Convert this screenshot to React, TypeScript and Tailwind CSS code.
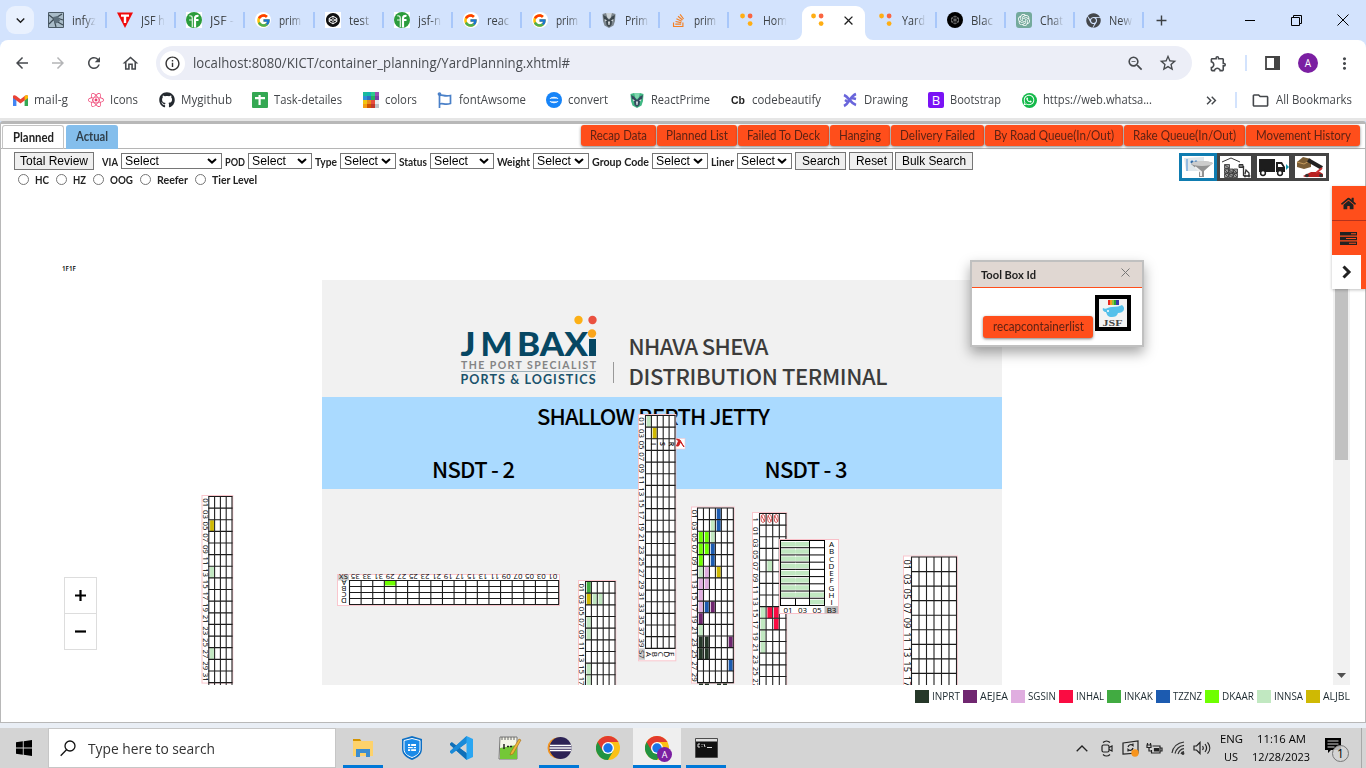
import { useLayoutEffect, useRef, useState, type ReactNode } from "react";
import {
  MdArrowBack, MdArrowForward, MdRefresh, MdOutlineHome, MdInfoOutline, MdOutlineExtension,
  MdZoomOut, MdStarBorder, MdMoreVert, MdClose, MdAdd, MdKeyboardArrowDown, MdOutlineFolder,
  MdKeyboardDoubleArrowRight,
} from "react-icons/md";
import { FaGithub, FaWhatsapp, FaStackOverflow, FaChrome, FaHome, FaReact } from "react-icons/fa";
import { FcGoogle } from "react-icons/fc";
import { SiOpenai, SiCodepen } from "react-icons/si";

/* Single line of text condensed or stretched to a given width. */
function Fit({ t, w, className = "" }: { t: string; w: number; className?: string }) {
  const ref = useRef<HTMLSpanElement>(null);
  const [s, setS] = useState(1);
  useLayoutEffect(() => {
    if (ref.current) setS(w / (ref.current.getBoundingClientRect().width || w));
  }, []);
  return (
    <span className={`block shrink-0 whitespace-pre ${className}`} style={{ width: w }}>
      <span ref={ref} className="inline-block origin-left" style={{ transform: `scaleX(${s})` }}>{t}</span>
    </span>
  );
}

const C = {
  dark: "#263829", purple: "#702670", pink: "#e0aee0", red: "#fa0c42", green: "#41ab41",
  blue: "#1c5bb0", lime: "#6eff00", mint: "#c1e8c1", gold: "#cfb903",
};

/* ---------- favicons ---------- */
const Globe = () => (
  <svg width="16" height="16" viewBox="0 0 16 16"><rect width="16" height="16" rx="1" fill="#4a5a66" /><rect x="1" y="1" width="14" height="14" fill="#a9bcc9" /><path d="M1 3l5 4 8-5M1 12l5-5 2 8M8 9l7 4M9 6l6 2" stroke="#3c4a54" strokeWidth="1.2" fill="none" /><path d="M5 5l5-1 2 5-5 3z" fill="#5d6f7c" /></svg>
);
const RedT = () => (
  <svg width="16" height="16" viewBox="0 0 16 16"><path d="M0 .5h16L8 16z" fill="#f00a0a" /><path d="M4 2.500h8v2.200H9.200V11H6.800V4.700H4z" fill="#fff" /></svg>
);
const GreenF = () => (
  <svg width="16" height="16" viewBox="0 0 16 16"><rect width="16" height="16" fill="#fff" /><circle cx="8" cy="8" r="8" fill="#2b9c3c" /><path d="M6.300 15V6.500C6.300 4.500 5.500 3.500 3.300 3.800M3 8h3.500" stroke="#e4f4e6" strokeWidth="1.200" fill="none" /><path d="M9 15.500V6.500C9 4.300 10.300 3.500 12.500 4M8 8h4.500" stroke="#fff" strokeWidth="2.200" fill="none" /></svg>
);
const Shield = ({ g = false }: { g?: boolean }) => (
  <svg width="16" height="16" viewBox="0 0 16 16"><path d="M1.500 2L5 1h6l3.500 1-.5 7-1.500 4.500L8 16l-4.500-2.500L2 9z" fill={g ? "#41b883" : "#7c868d"} /><path d="M2 3l3 1.500L8 8l3-3.500L14 3l-1 4-2 2-.500 4L8 15l-2.500-2L5 9 3 7z" fill={g ? "#35495e" : "#3c464c"} /><path d="M5 1h6l-1.500 5L8 7 6.500 6z" fill={g ? "#7fd6ae" : "#ccd3d7"} /><path d="M3.500 7l2.500 1.500-1.500.8zM12.500 7L10 8.500l1.500.8zM7 9.500h2L8.500 13h-1z" fill="#e8ecee" /></svg>
);
const Dots = () => (
  <svg width="18" height="18" viewBox="0 0 18 18"><circle cx="4" cy="4.500" r="2.700" fill="#ffae13" /><circle cx="12.500" cy="4.500" r="2.700" fill="#fa6541" /><circle cx="12.500" cy="13" r="2.700" fill="#ffae13" /></svg>
);
const Blackbox = () => (
  <svg width="16" height="16" viewBox="0 0 16 16"><circle cx="8" cy="8" r="8" fill="#000" /><path d="M8 4l3.500 2v4L8 12l-3.500-2V6zM8 4v8M4.500 6l7 4M11.500 6l-7 4" stroke="#999" strokeWidth=".6" fill="none" /></svg>
);
const Chat = () => (
  <span className="flex size-4 items-center justify-center rounded-[3px] bg-[#74aa9c] text-white"><SiOpenai size={12} /></span>
);

type Tab = [string, ReactNode, number];
const tabs: Tab[] = [
  ["infyz", <Globe />, 24], ["JSF h", <RedT />, 24], ["JSF -", <GreenF />, 24], ["prim", <FcGoogle size={15} />, 22],
  ["test", <SiCodepen size={14} color="#111" />, 20], ["jsf-n", <GreenF />, 23], ["reac", <FcGoogle size={15} />, 22],
  ["prim", <FcGoogle size={15} />, 22], ["Prim", <Shield />, 23], ["prim", <FaStackOverflow size={15} color="#f48024" />, 22],
  ["Hom", <Dots />, 24], ["", <Dots />, 0], ["Yard", <Dots />, 23], ["Blac", <Blackbox />, 22], ["Chat", <Chat />, 23],
  ["New", <FaChrome size={15} color="#44474b" />, 23],
];

function TabStrip() {
  return (
    <div className="flex h-10 bg-[#d3e3fd] text-[12px] text-[#3c4043]">
      <div className="mt-[6px] ml-[6px] flex h-7 w-7 items-center justify-center rounded-[9px] bg-[#e9f1fe]"><MdKeyboardArrowDown size={17} color="#1f1f1f" /></div>
      <div className="ml-1 flex">
        {tabs.map(([t, icon, w], i) => {
          if (i === 11)
            return (
              <div key={i} className="relative flex w-[69.15px] items-center pl-[3px]">
                <div className="mt-[6px] flex h-[34px] w-[63px] items-center rounded-t-[9px] bg-white pb-[6px] pl-[8px]">
                  <span className="flex w-4 items-center">{icon}</span>
                  <MdClose className="ml-[15px]" size={15} color="#1f1f1f" />
                </div>
                <svg className="absolute bottom-0 left-[-5px]" width="8" height="8"><path d="M8 0v8H0a8 8 0 0 0 8-8" fill="#fff" /></svg>
                <svg className="absolute right-[-5px] bottom-0" width="8" height="8"><path d="M0 0v8h8a8 8 0 0 1-8-8" fill="#fff" /></svg>
              </div>
            );
          return (
            <div key={i} className="flex w-[69.15px] items-center pl-[10px]">
              <span className={`flex h-4 w-4 items-center justify-center ${[3, 6, 7].includes(i) ? "rounded-full bg-white" : i === 4 ? "bg-white" : ""}`}>{icon}</span>
              <span className="ml-2 w-[24px] overflow-hidden [mask-image:linear-gradient(to_right,#000_50%,transparent)]"><Fit t={t} w={w} /></span>
              {i !== 10 && <span className="ml-auto h-4 w-[2px] bg-[#a8c7fa]" />}
            </div>
          );
        })}
      </div>
      <div className="flex w-[34px] items-center justify-center"><MdAdd size={17} /></div>
      <div className="ml-auto flex items-center pr-[17px] text-black">
        <span className="h-px w-[10px] bg-black" />
        <svg className="ml-[36px]" width="11" height="11" fill="none" stroke="#000"><path d="M.5 2.500h8v8h-8zM2.500 2.500v-2h8v8h-2" /></svg>
        <svg className="ml-[35px]" width="12" height="12" fill="none" stroke="#000"><path d="M.5.5l11 11M11.500.5l-11 11" /></svg>
      </div>
    </div>
  );
}

function Toolbar() {
  return (
    <div className="flex h-[46px] items-center rounded-t-[8px] bg-white text-[#46494d]">
      <div className="flex w-[156px] items-center gap-[18px] pl-[13px]">
        <MdArrowBack size={18} /><MdArrowForward size={18} color="#b4b5b7" /><MdRefresh size={18} /><MdOutlineHome size={19} />
      </div>
      <div className="flex h-[34px] w-[1036px] items-center rounded-full bg-[#eceef7] pr-[14px] pl-[4px]">
        <span className="flex size-[25px] items-center justify-center rounded-full bg-white"><MdInfoOutline size={17} color="#333" /></span>
        <Fit className="mb-[2px] ml-[8px] text-[14px] text-[#4a4d52]" t="localhost:8080/KICT/container_planning/YardPlanning.xhtml#" w={377} />
        <MdZoomOut className="ml-auto" size={19} /><MdStarBorder className="ml-[13px]" size={20} />
      </div>
      <MdOutlineExtension className="ml-[17px]" size={19} />
      <span className="ml-[17px] h-4 w-[2px] bg-[#d3e3fd]" />
      <svg className="ml-[18px]" width="15" height="14"><path d="M1 1h13v12H1z" fill="none" stroke="#444" strokeWidth="1.800" /><path d="M9 0h6v14H9z" fill="#444" /></svg>
      <span className="ml-[18px] flex size-5 items-center justify-center rounded-full bg-[#7b1fa2] text-[10px] text-white">A</span>
      <MdMoreVert className="ml-[17px]" size={19} />
    </div>
  );
}

const swatches = ["#1abc9c", "#12b5b0", "#2cc98f", "#9b4fb0", "#2f8fd8", "#2f6fc0", "#27ae60", "#7a3ea8", "#f1c40f", "#e98b1c", "#e74c3c", "#e8ecee", "#f39c12", "#d35400", "#c0392b", "#bdc3c7"];
const bookmarks: [string, ReactNode, number][] = [
  ["mail-g", <svg width="15" height="11" viewBox="0 0 15 11"><path d="M0 1v10h3.400V4z" fill="#4285f4" /><path d="M15 1v10h-3.400V4z" fill="#34a853" /><path d="M0 1.500C0 0 2 0 3 .8L7.500 4.200 12 .8C13 0 15 0 15 1.500V3L7.500 8.500 0 3z" fill="#ea4335" /><path d="M11.600 1v4.400L15 3V1.500C15 0 13 0 11.600 1z" fill="#fbbc04" /></svg>, 34],
  ["Icons", <FaReact size={16} color="#ee3c6e" />, 28],
  ["Mygithub", <FaGithub size={16} color="#24292f" />, 51],
  ["Task-detailes", <svg width="16" height="16"><rect width="16" height="16" rx="1" fill="#34a853" /><path d="M3 5h10v2.200H8.700V13H6.500V7.200H3zM6.500 3h2.200v3H6.500z" fill="#fff" /></svg>, 68],
  ["colors", <svg width="16" height="16">{swatches.map((c, i) => <rect key={i} x={(i % 4) * 4} y={(i >> 2) * 4} width="4" height="4" fill={c} />)}</svg>, 32],
  ["fontAwsome", <svg width="16" height="16" fill="none" stroke="#4a80c8" strokeWidth="1.700"><path d="M2.500 2v14M2.500 3.500c3-1.500 4 1.500 11 0v8c-6 2-7.500-1-11 .5" /><circle cx="2.500" cy="2" r="1" /></svg>, 67],
  ["convert", <svg width="16" height="16"><circle cx="8" cy="8" r="8" fill="#1684f8" /><path d="M3.500 7a4.800 3.500 0 0 1 9 0zM3.500 9a4.800 3.500 0 0 0 9 0z" fill="#fff" opacity=".9" /><path d="M5 7h6M5 9h6" stroke="#1684f8" strokeWidth=".8" /></svg>, 40],
  ["ReactPrime", <Shield g />, 59],
  ["codebeautify", <Fit className="font-['Liberation_Sans',sans-serif] text-[10px] font-bold text-[#222]" t="Cb" w={14} />, 69],
  ["Drawing", <svg width="16" height="16"><path d="M2 3c5 2 6 8 12 10M14 2C8 4 8 11 2 14M3 8l3 2M10 6l4 1" stroke="#6965db" strokeWidth="2.600" fill="none" /></svg>, 44],
  ["Bootstrap", <span className="flex size-4 items-center justify-center rounded-[2px] bg-[#7a12f5] text-[13px] text-white">B</span>, 51],
  ["https://web.whatsa...", <span className="flex size-[15px] items-center justify-center rounded-full bg-[#14b94a]"><FaWhatsapp size={12} color="#fff" /></span>, 109],
];

function Bookmarks() {
  return (
    <div className="flex h-[32px] items-center bg-white pb-[4px] pl-[12px] text-[12px] text-[#44474b]">
      <div className="flex gap-5">
        {bookmarks.map(([t, icon, w]) => (
          <div key={t} className="flex items-center gap-[6px] pr-[0.4px]">
            <span className="flex h-4 w-4 items-center justify-center">{icon}</span>
            <Fit className="mb-px" t={t} w={w} />
          </div>
        ))}
      </div>
      <MdKeyboardDoubleArrowRight className="ml-[50px]" size={17} />
      <span className="ml-[15px] h-4 w-[2px] bg-[#d3e3fd]" />
      <MdOutlineFolder className="ml-[14px]" size={19} />
      <Fit className="mb-px ml-[6px]" t="All Bookmarks" w={76} />
    </div>
  );
}

/* ---------- application header ---------- */
const actions: [string, number, string][] = [
  ["Recap Data", 57, "w-[75px]"], ["Planned List", 62, "w-[80px]"], ["Failed To Deck", 73, "w-[91px]"], ["Hanging", 42, "w-[60px]"],
  ["Delivery Failed", 75, "w-[93px]"], ["By Road Queue(In/Out)", 120, "w-[138px]"], ["Rake Queue(In/Out)", 103, "w-[121px]"], ["Movement History", 95, "w-[114px]"],
];

function Header() {
  return (
    <div className="flex h-[25px] border-b border-[#b5b5b5] pt-px pl-px font-['Lato',sans-serif] text-[12.5px]">
      <div className="flex h-6 w-[62px] items-center justify-center rounded-t-[3px] border border-b-0 border-[#c4c4c4] pb-px font-bold text-[#222]"><Fit t="Planned" w={41} /></div>
      <div className="ml-[2px] flex h-6 w-[52px] items-center justify-center rounded-t-[3px] bg-[#84beec] pb-px font-bold text-[#30404c]"><Fit t="Actual" w={32} /></div>
      <div className="mr-[5px] ml-auto flex gap-px">
        {actions.map(([t, w, cls]) => (
          <button key={t} className={`${cls} flex h-[21px] items-center justify-center rounded-[3px] bg-[#ff4e1b] pb-px text-[#5e2214] shadow-[0_1px_3px_rgba(0,0,0,0.5)]`}><Fit t={t} w={w} /></button>
        ))}
      </div>
    </div>
  );
}

const Label = ({ t, w, c = "" }: { t: string; w: number; c?: string }) => (
  <Fit className={`font-['Lato',sans-serif] text-[11px] font-bold text-[#222] ${c}`} t={t} w={w} />
);
const Sel = ({ c = "w-[56px]" }: { c?: string }) => (
  <div className={`${c} flex h-4 shrink-0 items-center border border-[#767676] bg-white pr-[4px] pl-[3px] text-[12px] text-black`}>
    <Fit t="Select" w={34} />
    <svg className="ml-auto" width="10" height="6" fill="none" stroke="#000" strokeWidth="2"><path d="M1 1l4 3.600L9 1" /></svg>
  </div>
);
const Btn = ({ t, w, c }: { t: string; w: number; c: string }) => (
  <button className={`${c} flex h-[18px] shrink-0 items-center justify-center border border-[#767676] bg-[#efefef] text-[12px] text-black`}><Fit t={t} w={w} /></button>
);
const Radio = ({ t, w, c = "" }: { t: string; w: number; c?: string }) => (
  <div className={`flex items-center ${c}`}>
    <span className="mb-[2px] size-[11px] rounded-full border border-[#767676] bg-white" />
    <Label c="mb-px ml-[6px]" t={t} w={w} />
  </div>
);

function Pictures() {
  return (
    <div className="flex h-[28px] bg-[#444]">
      <div className="flex h-7 w-[38px] items-center justify-center border-[3px] border-[#0f7cb0] bg-white">
        <svg width="32" height="22"><path d="M2 2l20-1v14H4z" fill="#dfe6ea" /><path d="M5 3v12M9 5h2v2H9zM13 5h2v2h-2z" stroke="#4a90d8" /><path d="M9 8c6-3 16-3 22-1l-9 8v6h-5v-6z" fill="#929292" /><ellipse cx="20" cy="7.500" rx="10.500" ry="2.500" fill="#ccc" /><path d="M13 11l6 5v4" stroke="#eee" strokeWidth="2" fill="none" /></svg>
      </div>
      <div className="flex w-[37px] items-center justify-center">
        <svg className="bg-white" width="31" height="22" fill="none" stroke="#333"><path d="M2 6l9-4 9 4" /><path d="M4.500 8.500h5v4h-5zM4.500 13h4v4h-4zM9 13h4v4H9zM13.500 13h4v4h-4zM4.500 17.500h4v4h-4zM9 17.500h4v4H9zM13.500 17.500h4v4h-4z" fill="#999" strokeWidth=".8" /><path d="M5 9l4 3M5 14l3 3M9 14l4 3M14 14l3 3M5 18l3 3M9 18l4 3M14 18l3 3" strokeWidth=".8" /><path d="M19 8.500h4v3h-4z" fill="#777" /><path d="M23.500 10v10M25 18l1-4 3 3v3h-5" strokeWidth="1.300" /><circle cx="25" cy="20" r="1" /><circle cx="29" cy="20" r="1" /></svg>
      </div>
      <div className="flex w-[38px] items-center justify-center">
        <svg className="bg-white" width="32" height="22"><path d="M2 3h16v13H2zM19 6h6l3 5v5h-9z" fill="#1d1d1d" /><path d="M21 8h3l2 3h-5z" fill="#fff" /><path d="M29 8l3 3-3 3z" fill="#1397ac" /><circle cx="6" cy="17" r="2.400" fill="#fff" stroke="#1d1d1d" strokeWidth="1.500" /><circle cx="23" cy="17" r="2.400" fill="#fff" stroke="#1d1d1d" strokeWidth="1.500" /></svg>
      </div>
      <div className="flex w-[37px] items-center justify-center">
        <svg className="bg-white" width="31" height="22"><path d="M2 6l6-5 8 2v8l-7 2-7-2z" fill="#7a5d35" /><path d="M2 6l7 2 7-4" stroke="#c79c5d" fill="none" /><path d="M13 4l14 8" stroke="#222" strokeWidth="4" /><path d="M8 20l8-4h9l3 2v3H10z" fill="#b82222" /><path d="M27 12l-6 5" stroke="#c33" strokeWidth="2" /><circle cx="12" cy="19.500" r="1.800" fill="#333" /><circle cx="26" cy="19.500" r="1.800" fill="#333" /></svg>
      </div>
    </div>
  );
}

function Filters() {
  return (
    <div className="flex h-[38px] pt-[3px] pr-[36px] pl-[13px] font-['Liberation_Sans',sans-serif]">
      <div>
        <div className="flex h-[18px] items-center gap-[3px]">
          <Btn c="w-[80px]" t="Total Review" w={68} />
          <Label c="ml-[5px]" t="VIA" w={16} /><Sel c="w-[101px]" />
          <Label t="POD" w={20} /><Sel c="w-[64px]" />
          <Label t="Type" w={22} /><Sel />
          <Label t="Status" w={28} /><Sel c="w-[64px]" />
          <Label t="Weight" w={33} /><Sel />
          <Label t="Group Code" w={57} /><Sel />
          <Label t="Liner" w={23} /><Sel c="w-[55px]" />
          <Btn c="w-[51px]" t="Search" w={38} /><Btn c="w-[44px]" t="Reset" w={31} /><Btn c="-ml-px w-[78px]" t="Bulk Search" w={64} />
        </div>
        <div className="flex h-[20px] items-center pl-[4px]">
          <Radio t="HC" w={14} /><Radio c="ml-[7px]" t="HZ" w={13} /><Radio c="ml-[7px]" t="OOG" w={23} /><Radio c="ml-[7px]" t="Reefer" w={31} /><Radio c="ml-[7px]" t="Tier Level" w={45} />
        </div>
      </div>
      <div className="mt-px ml-auto"><Pictures /></div>
    </div>
  );
}

/* ---------- yard map ---------- */
type Cell = [row: number, col: number, color: string];
const odd = (n: number) => Array.from({ length: n }, (_, i) => String(i * 2 + 1).padStart(2, "0"));

/* Vertical yard block: rotated bay numbers on the left, rows of slots on the right. */
function Block({ x, y, gx, cw, cols, rh, labels, cells, footer, fs = 7.8 }: {
  x: number; y: number; gx: number; cw: number; cols: number; rh: number; labels: string[]; cells: Cell[]; footer?: string; fs?: number;
}) {
  const n = labels.length, W = cols * cw, H = n * rh, end = footer ? 12 : 0;
  return (
    <g>
      <rect x={x} y={y - 1} width={gx + W - x + 0.8} height={H + end + 1.5} fill="#fff" stroke="#f9c6cd" />
      {footer && <rect x={x + 0.5} y={y + H} width={gx - x - 1} height={11.5} fill="#ccc" />}
      {cells.map(([r, c, f], i) => <rect key={i} x={gx + c * cw + 1.3} y={y + r * rh + 0.5} width={cw - 2} height={rh - 0.5} fill={f} />)}
      <path d={Array.from({ length: n + 1 }, (_, i) => `M${gx - 0.5} ${y + i * rh}h${W + 1}`).join("")} stroke="#1a1a1a" strokeWidth="1.15" />
      <path d={Array.from({ length: cols + 1 }, (_, i) => `M${gx + i * cw} ${y}v${H}`).join("")} stroke="#222" strokeWidth="1.1" />
      {labels.map((l, i) => (
        <text key={i} transform={`translate(${x + 0.7} ${y + (i + 0.5) * rh + 0.5}) rotate(90)`} fontSize={fs} fontWeight="500" textAnchor="middle" fill="#000">{l}</text>
      ))}
      {footer && <text transform={`translate(${x + 0.7} ${y + H + 6}) rotate(90)`} fontSize="7.800" fontWeight="500" textAnchor="middle" fill="#222">{footer}</text>}
      {footer && "ABCDE".split("").map((l, i) => (
        <text key={l} transform={`translate(${gx + i * cw + 0.3} ${y + H + 6}) rotate(90)`} fontSize="8" fontWeight="500" textAnchor="middle">{l}</text>
      ))}
    </g>
  );
}

function YardMap() {
  const hx = (i: number) => 349.5 + i * 11.62;
  return (
    <svg width="1332" height="499" viewBox="1 187 1332 499" className="block font-['Open_Sans','Noto_Sans',sans-serif]">
      <text x="62" y="271" fontSize="7.500" fontWeight="600" textLength="14" lengthAdjust="spacingAndGlyphs">1F1F</text>
      <rect x="322" y="280" width="680" height="410" fill="#f1f1f1" />
      <rect x="322" y="397" width="680" height="92" fill="#aadaff" />
      <g className="font-['Lato',sans-serif]" fill="#064763">
        <text x="460.500" y="356" fontSize="33" fontWeight="900" textLength="15" lengthAdjust="spacingAndGlyphs">J</text>
        <text x="480.500" y="356" fontSize="33" fontWeight="900" textLength="32" lengthAdjust="spacingAndGlyphs">M</text>
        <text x="517" y="356" fontSize="33" fontWeight="900" textLength="71" lengthAdjust="spacingAndGlyphs">BAX</text>
        <path d="M589 339h7v17h-7z" />
        <text x="461" y="369" fontSize="10.500" fontWeight="700" fill="#848484" textLength="135">THE PORT SPECIALIST</text>
        <path d="M461 371.500h135" stroke="#9fb1ba" />
        <text x="460.500" y="383.500" fontSize="12.500" fontWeight="700" fill="#1b536c" textLength="135">PORTS &amp; LOGISTICS</text>
      </g>
      <circle cx="578.500" cy="320" r="4.200" fill="#fcb016" /><circle cx="592.500" cy="320" r="4.200" fill="#ea5140" /><circle cx="592" cy="333.500" r="4.200" fill="#fba61c" />
      <path d="M613.500 362v21" stroke="#999" />
      <g className="font-['Noto_Sans_CJK_SC',sans-serif]" fontSize="22" fontWeight="500">
        <g fill="#3c3c3b">
          <text x="628.500" y="354.500" textLength="140">NHAVA SHEVA</text>
          <text x="628.500" y="384.500" textLength="259">DISTRIBUTION TERMINAL</text>
        </g>
        <text x="537" y="425" textLength="233">SHALLOW BERTH JETTY</text>
        <text x="432" y="478" textLength="83">NSDT - 2</text>
        <text x="764.500" y="478" textLength="83">NSDT - 3</text>
      </g>

      <Block x={202} y={496.5} gx={208.8} cw={5.8} cols={4} rh={11.63} labels={odd(16)} cells={[[2, 0, C.gold], [6, 0, C.mint], [13, 0, C.mint]]} />
      <path d="M208.800 682.600v4M214.600 682.600v4M220.400 682.600v4M226.200 682.600v4M232 682.600v4" stroke="#222" />
      <g>
        <rect x="337.500" y="574.500" width="222" height="31" fill="#fff" stroke="#f9c6cd" />
        <rect x="338" y="575" width="11" height="5.500" fill="#ccc" />
        <rect x={hx(3) + 0.5} y="581" width="11" height="4.500" fill={C.lime} />
        <path d={Array.from({ length: 19 }, (_, i) => `M${hx(i)} 580.500v24`).join("") + Array.from({ length: 5 }, (_, i) => `M349 ${580.5 + i * 6}h210`).join("")} stroke="#1a1a1a" strokeWidth="1.100" />
        <g fontSize="7.800" fontWeight="500" textAnchor="middle">
          {odd(18).reverse().map((l, i) => <text key={l} transform={`translate(${hx(i) + 5.8} 574.300) rotate(180)`}>{l}</text>)}
          <text transform="translate(343.500 574.300) rotate(180)">SX</text>
          {"ABCD".split("").map((l, i) => <text key={l} transform={`translate(344 ${580.3 + i * 6}) rotate(180)`}>{l}</text>)}
        </g>
      </g>
      <Block x={578.5} y={581.5} gx={585.5} cw={5.9} cols={5} rh={11.66} labels={odd(9)} cells={[[0, 0, C.green], [1, 0, C.gold], [1, 1, C.mint], [1, 2, C.mint], [3, 0, C.mint], [4, 0, C.mint], [7, 0, C.mint], [8, 0, C.mint]]} />
      <Block x={638.5} y={415.5} gx={645.5} cw={5.9} cols={5} rh={11.64} labels={odd(20)} footer="S7" cells={[[0, 0, C.mint], [1, 1, C.gold]]} />
      {["I", "S", "R"].map((l, i) => <text key={l} transform={`translate(${650.5 + i * 9} 444) rotate(90)`} fontSize="7" fontWeight="600" textAnchor="middle">{l}</text>)}
      <rect x="676" y="438.500" width="9" height="10.500" fill="#fff" stroke="#f9c6cd" strokeWidth=".6" />
      <path d="M676.500 439l3.500 1 4 7-3.500-5-2 4h-2l2-5z" fill="#c22" stroke="#c22" />
      <Block x={691.5} y={508} gx={697.5} cw={5.97} cols={6} rh={11.64} labels={odd(15)} cells={[
        [0, 3, C.blue], [1, 3, C.blue], [1, 2, C.mint], [2, 2, C.mint], [2, 0, C.lime], [3, 0, C.lime], [4, 0, C.lime], [2, 1, C.lime], [3, 1, C.lime],
        [3, 2, C.blue], [4, 2, C.blue], [5, 0, C.mint], [5, 1, C.pink], [5, 3, C.gold], [6, 0, C.pink], [6, 1, C.pink], [7, 0, C.pink], [8, 0, C.pink],
        [8, 1, C.blue], [8, 2, C.purple], [9, 0, C.purple], [10, 0, C.mint], [11, 0, C.dark], [11, 1, C.dark], [11, 5, C.purple], [12, 0, C.dark], [12, 1, C.dark],
        [13, 5, C.blue]]} />
      <path d="M699 683.500h4v3h-4zM705 683.500h4v3h-4zM717 683.500h4v3h-4zM723 683.500h4v3h-4z" fill={C.dark} />
      <Block x={752.5} y={513.5} gx={759.5} cw={6.6} cols={4} rh={11.64} labels={["1", ...odd(14)]} cells={[[4, 1, C.mint], [8, 0, C.mint], [9, 0, C.mint], [10, 0, C.mint], [11, 0, C.mint], [8, 1, C.red], [8, 2, C.red], [9, 2, C.red]]} />
      {[0, 1, 2].map((i) => <g key={i} fill="none" stroke="#cf4040" strokeWidth=".9"><ellipse cx={763 + i * 6.6} cy="518.500" rx="2" ry="4" /><path d={`M${761.5 + i * 6.6} 515.500l3 6`} /></g>)}
      <g>
        <rect x="779.500" y="539.500" width="59" height="74" fill="#fff" stroke="#f9c0c8" />
        <rect x="824.500" y="606" width="13.500" height="7.500" fill="#bdbdbd" />
        {Array.from({ length: 9 }, (_, r) => [0, 1, 2].map((c) => ((c < 2 && r < 8) || (c === 2 && r > 6)) && <rect key={`${r}-${c}`} x={780.5 + c * 14.67} y={542 + r * 7.22} width="14.500" height="4.500" fill={C.mint} />))}
        <path d={Array.from({ length: 10 }, (_, i) => `M780 ${540.5 + i * 7.22}h45`).join("")} stroke="#000" />
        <path d="M780.500 540v66M809.500 540v66M824.500 540v66M795.500 598.500v7" stroke="#000" />
        <path d="M795.500 541v57" stroke="#fff" strokeWidth=".7" strokeDasharray="1.500 5.720" />
        <g fontSize="8" fontWeight="500" textAnchor="middle">
          {"ABCDEFGHI".split("").map((l, i) => <text key={l} x="831.500" y={547.2 + i * 7.22}>{l}</text>)}
          {["01", "03", "05", "B3"].map((l, i) => <text key={l} x={788 + i * 14.5} y="613">{l}</text>)}
        </g>
      </g>
      <Block x={903.5} y={557} gx={911.5} cw={7.5} cols={6} rh={14.55} fs={9.3} labels={odd(9)} cells={[]} />
    </svg>
  );
}

function ZoomControl() {
  return (
    <div className="absolute top-[577px] left-[64px] flex h-[73px] w-[33px] flex-col border border-[#ddd] bg-white">
      <div className="flex h-9 items-center justify-center border-b border-[#ddd]"><svg width="11" height="11"><path d="M5.500 0v11M0 5.500h11" stroke="#000" strokeWidth="2.200" /></svg></div>
      <div className="flex h-[35px] items-center justify-center"><svg width="11" height="3"><path d="M0 1.500h11" stroke="#000" strokeWidth="2.200" /></svg></div>
    </div>
  );
}

function ToolBox() {
  return (
    <div className="absolute top-[260px] left-[970px] h-[87px] w-[174px] border-2 border-[#c0c0c0] bg-white font-['Lato',sans-serif] shadow-[0_6px_12px_rgba(0,0,0,0.35)]">
      <div className="flex h-[26px] items-center justify-between border-b border-[#ff4e1b] bg-[#e0d7d2] pr-[12px] pl-[9px] text-[12px] font-bold text-[#1e1e1e]">
        <Fit t="Tool Box Id" w={55} />
        <svg className="mb-[4px]" width="9" height="9" stroke="#777"><path d="M.5.5l8 8M8.500.5l-8 8" /></svg>
      </div>
      <div className="flex items-start gap-[2px] pl-[11px]">
        <button className="mt-[28px] flex h-[22px] w-[110px] items-center justify-center rounded-[3px] bg-[#ff4e1b] pb-px text-[12.5px] text-[#5e2214] shadow-[0_1px_3px_rgba(0,0,0,0.5)]"><Fit t="recapcontainerlist" w={91} /></button>
        <div className="mt-[7px] size-9 border-4 border-black bg-[#f3f3f3]">
          <svg width="28" height="28"><path d="M9 1h2v5H9z" fill="#e8261c" /><path d="M11 1h2v5h-2z" fill="#f79a1e" /><path d="M13 1h2v5h-2z" fill="#8ec43d" /><path d="M15 1h2v5h-2z" fill="#27a53a" /><path d="M17 1h3v5h-3z" fill="#3a35a8" /><path d="M4 9c3 2 5-1 9-1 5 0 8-1 10-2 4 3 2 8-4 8-1 3-3 4-6 4-4 0-5-2-6-5-2 0-4-2-3-4z" fill="#55c0ea" /><circle cx="9" cy="12" r="1" fill="#fff" /><text x="3.500" y="27" fontSize="9" fontWeight="700" textLength="20" lengthAdjust="spacingAndGlyphs" fill="#444" className="font-['Liberation_Serif',serif]">JSF</text></svg>
        </div>
      </div>
    </div>
  );
}

function SideMenu() {
  return (
    <div className="absolute top-[186px] right-0 flex h-[103px] w-[34px] flex-col bg-[#ff4e1b] shadow-[0_1px_3px_rgba(0,0,0,0.25)]">
      <div className="flex h-[35px] items-center justify-center border-b border-[#b5321c] pr-[2px]"><FaHome size={15} color="#222" /></div>
      <div className="flex h-[34px] items-center justify-center pr-px"><svg width="17" height="13"><path d="M0 0h17v3.600H0zM0 4.700h17v3.600H0zM0 9.400h17V13H0z" fill="#222" /><path d="M11 1.300h5v1h-5zM6 6h10v1H6zM9 10.700h7v1H9z" fill="#ff4e1b" /></svg></div>
      <div className="flex h-[34px] w-[29px] items-center justify-center bg-white"><svg width="10" height="14" fill="none" stroke="#222" strokeWidth="3"><path d="M1.500 1.500L7 7l-5.500 5.500" /></svg></div>
    </div>
  );
}

const legend: [string, number, string][] = [
  ["INPRT", 28, "bg-[#263829]"], ["AEJEA", 28, "bg-[#702670]"], ["SGSIN", 28, "bg-[#e0aee0]"], ["INHAL", 28, "bg-[#fa0c42]"], ["INKAK", 29, "bg-[#41ab41]"],
  ["TZZNZ", 29, "bg-[#1c5bb0]"], ["DKAAR", 32, "bg-[#6eff00]"], ["INNSA", 29, "bg-[#c1e8c1]"], ["ALJBL", 27, "bg-[#cfb903]"],
];

/* ---------- Windows taskbar ---------- */
const ChromeLogo = () => (
  <svg width="24" height="24" viewBox="0 0 24 24"><circle cx="12" cy="12" r="12" fill="#fbc116" /><path d="M12 12L1.600 6A12 12 0 0 0 12 24l5.200-9z" fill="#229342" /><path d="M12 6h10.400A12 12 0 0 0 1.600 6L6.800 15z" fill="#e33b2e" /><circle cx="12" cy="12" r="6" fill="#fff" /><circle cx="12" cy="12" r="4.700" fill="#1a73e8" /></svg>
);
const apps: { icon: ReactNode; box: string; bar: string }[] = [
  { icon: <svg width="22" height="20"><path d="M1 1h7l2 3H1z" fill="#d49400" /><path d="M1 3h20v15H1z" fill="#fdd26b" /><path d="M4 19v-8h14v8h-4v-4H8v4z" fill="#3c8dcf" /></svg>, box: "", bar: "w-10 bg-[#0078d7]" },
  { icon: <svg width="22" height="24"><path d="M11 0l10 3v10c0 6-5 9-10 11C6 22 1 19 1 13V3z" fill="#0d6fc4" /><path d="M11 2.500l8 2V13c0 5-4 7-8 8.500C7 20 3 18 3 13V4.500z" fill="#1c8be8" stroke="#fff" /><path d="M7 8h8v7H7z" fill="#fff" /><path d="M7 10.500h8M7 12.700h8M9.700 8v2.500M12.300 10.500v2M9.700 13v2" stroke="#1c8be8" /></svg>, box: "", bar: "" },
  { icon: <svg width="24" height="24"><path d="M17.500 0L4.500 12l13 12V17l-7-5 7-5z" fill="#1583d0" /><path d="M1 7.500L2.800 6 18 17.500V24L1 9z" fill="#0f6fb8" /><path d="M1 16.500L2.800 18 18 6.500V0L1 15z" fill="#1a8ad8" /><path d="M17.500 0L24 3v18l-6.500 3z" fill="#2aa6f2" /></svg>, box: "", bar: "" },
  { icon: <svg width="24" height="24"><path d="M2 1h17v22H1z" fill="#f5f5e9" stroke="#777" /><path d="M2 12l17-3v14H2z" fill="#74c837" /><path d="M4 1v3M7 1v3M10 1v3M13 1v3M16 1v3" stroke="#666" /><path d="M6 8v5M9 10.500h2M12 10.500h2" stroke="#222" strokeWidth="1.500" fill="none" /><path d="M21 3l2 1-8 14-3 1 1-3z" fill="#edb73a" stroke="#a66816" strokeWidth=".6" /></svg>, box: "", bar: "" },
  { icon: <svg width="25" height="24"><circle cx="11" cy="12" r="10.500" fill="#f2941f" /><circle cx="13.500" cy="12" r="11" fill="#2c2255" /><path d="M3 9.500h21M2.500 12h22M3 14.500h21" stroke="#fff" strokeWidth="1.300" /></svg>, box: "", bar: "w-10 bg-[#0078d7]" },
  { icon: <ChromeLogo />, box: "", bar: "" },
  { icon: <span className="relative"><ChromeLogo /><span className="absolute right-[-3px] bottom-[-2px] flex size-[15px] items-center justify-center rounded-full bg-[#7b1fa2] text-[9px] text-white">A</span></span>, box: "bg-[#efefef]", bar: "w-12 bg-[#0078d7]" },
  { icon: <svg width="23" height="20"><path d="M0 0h23v20H0z" fill="#111" stroke="#888" /><path d="M1 1h21v2.500H1z" fill="#ddd" /><path d="M5 6H3v3h2M7 6v.8M7 8.300V9M9 6l1 3M12 9.500h5" stroke="#ddd" fill="none" /></svg>, box: "", bar: "w-10 bg-[#0078d7]" },
];

function Taskbar() {
  return (
    <div className="flex h-10 bg-[#d4d4d4] text-black">
      <div className="flex w-[48px] items-center pl-4"><svg width="16" height="16"><path d="M0 2.300L6.800 1.300v6.300H0zM7.700 1.200L16 0v7.600H7.700zM0 8.500h6.800v6.300L0 13.800zM7.700 8.500H16V16l-8.300-1.200z" fill="#000" /></svg></div>
      <div className="flex w-[288px] items-center border border-[#c6c6c6] bg-white pl-[11px]">
        <svg width="16" height="17" fill="none" stroke="#111" strokeWidth="1.300"><circle cx="10" cy="6" r="5" /><path d="M6.500 9.700L.7 15.800" /></svg>
        <Fit className="ml-[12px] text-[14.5px] text-[#333]" t="Type here to search" w={127} />
      </div>
      <div className="ml-[3px] flex">
        {apps.map((a, i) => (
          <div key={i} className={`mr-[1px] flex w-12 flex-col items-center ${a.box}`}>
            <span className="flex h-[37px] items-center pt-[3px]">{a.icon}</span>
            <span className={`h-[3px] ${a.bar}`} />
          </div>
        ))}
      </div>
      <div className="ml-auto flex items-center pr-[4px]">
        <svg width="12" height="7" fill="none" stroke="#222" strokeWidth="1.300"><path d="M.7 6.300L6 1l5.300 5.300" /></svg>
        <svg className="ml-[13px]" width="12" height="17" fill="none" stroke="#222" strokeWidth="1.200"><rect x="1" y="5" width="7" height="7" rx="1.500" /><path d="M8 7.500l3-1.500v5L8 9.500M2 2.500c2-2 5-2 7 0M2 14.500c2 2 5 2 7 0" /></svg>
        <svg className="ml-[9px]" width="18" height="17" fill="none" stroke="#222" strokeWidth="1.200"><path d="M1 3l15-2v12L1 14z" /><path d="M6 7a3 3 0 0 1 5-1.500V3.500M11 8a3 3 0 0 1-5 1.500v2" /><circle cx="13" cy="13" r="3.700" fill="#f7941d" stroke="none" /></svg>
        <svg className="ml-[6px]" width="17" height="13" fill="none" stroke="#222" strokeWidth="1.200"><path d="M6.500 4H14v7H5.500V8M14 6h2v3h-2" /><path d="M8.500 6.500h4v2.500h-4z" fill="#222" /><path d="M1.500 1v2M4.500 1v2M1 3h4v2.500H1zM3 6v3h2" /></svg>
        <svg className="ml-[8px]" width="15" height="14" fill="none" stroke="#333" strokeWidth="1.200"><path d="M1 12C2 6 6 2 13 1M4 12.500C5 8.500 8 5 13 4.300M7 13c1-3 3-5 6-5.400M10 13c.4-1.300 1.400-2.200 3-2.400" /><circle cx="12" cy="12.500" r=".8" fill="#333" /></svg>
        <svg className="ml-[7px]" width="18" height="14" fill="none" stroke="#222" strokeWidth="1.200"><path d="M1 5h2.500L7 1.500v11L3.500 9H1zM9.500 5c1 1.300 1 2.700 0 4M12 3c2 2.500 2 5.500 0 8M14.500 1.300c3 3.500 3 8 0 11.400" /></svg>
        <div className="ml-[8px] flex w-[24px] flex-col items-center text-[11.5px] leading-[18px]"><Fit t="ENG" w={23} /><Fit t="US" w={14} /></div>
        <div className="ml-[9px] flex w-[58px] flex-col items-center text-[11.5px] leading-[18px]"><Fit t="11:16 AM" w={49} /><Fit t="12/28/2023" w={58} /></div>
        <svg className="mt-[4px] ml-[14px]" width="27" height="27"><path d="M1 1h16v12H7l-3 3v-3H1z" fill="#000" /><path d="M3.500 4h11M3.500 7h11M3.500 10h7" stroke="#d4d4d4" strokeWidth="1.200" /><circle cx="16.500" cy="16.500" r="8" fill="#d4d4d4" fillOpacity=".85" stroke="#777" /><text x="16.500" y="21" textAnchor="middle" fontSize="12">1</text></svg>
        <span className="ml-[10px] h-10 w-px bg-[#a8a8a8]" />
      </div>
    </div>
  );
}

export default function App() {
  return (
    <div className="relative flex h-[768px] w-[1366px] flex-col overflow-hidden bg-[#d3e3fd] font-['Open_Sans','Noto_Sans',sans-serif] leading-[normal]">
      <TabStrip />
      <Toolbar />
      <Bookmarks />
      <div className="h-[3px] bg-[#e6e6e6]" />
      <main className="flex h-[602px] flex-col rounded-t-[3px] border border-t-3 border-[#b8b8b8] bg-white">
        <Header />
        <Filters />
        <div className="flex h-[498px] overflow-hidden">
          <YardMap />
          <div className="flex w-[17px] shrink-0 flex-col items-center bg-[#f1f1f1]">
            <div className="h-[273px] w-[13px] bg-[#c1c1c1]" />
            <svg className="mt-auto mb-[7px]" width="9" height="5"><path d="M0 0h9L4.500 5z" fill="#505050" /></svg>
          </div>
        </div>
        <div className="flex justify-end gap-[3px] pt-[4px] pr-[15px] text-[10.5px] text-[#1d2a30]">
          {legend.map(([t, w, bg]) => (
            <div key={t} className="flex h-[14px] items-center gap-[3px]">
              <span className={`h-[13px] w-[14px] ${bg}`} />
              <Fit t={t} w={w} />
            </div>
          ))}
        </div>
      </main>
      <div className="h-[5px] bg-[#e9eef5]" />
      <Taskbar />
      <ZoomControl />
      <ToolBox />
      <SideMenu />
    </div>
  );
}
